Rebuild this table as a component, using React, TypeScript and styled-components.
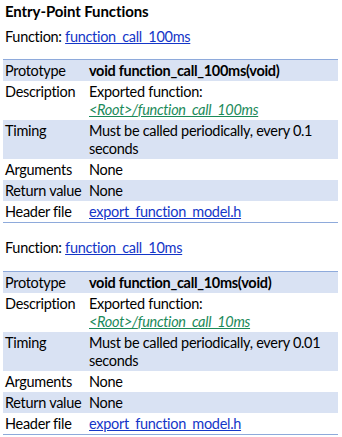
import React from "react";
import styled, { createGlobalStyle } from "styled-components";

const Global = createGlobalStyle`
  html, body { margin: 0; padding: 0; background: #ffffff; }
  body { font-family: Lato, "Open Sans", "Liberation Sans", sans-serif; color: #000; }
`;

const Page = styled.div`
  padding: 1px 4px 0 3px;
  display: flex;
  flex-direction: column;
`;

const Title = styled.h1`
  margin: 0 0 0 2px;
  font-size: 15px;
  font-weight: 700;
  line-height: 20px;
  letter-spacing: -0.1px;
`;

const FnLine = styled.p<{ $top: number }>`
  margin: ${(p) => p.$top}px 0 0 2px;
  font-size: 14.5px;
  line-height: 18px;
  letter-spacing: -0.3px;
`;

const Link = styled.a`
  color: #1436c8;
  text-decoration: underline;
`;

const PathLink = styled.a`
  color: #1b8a5a;
  font-style: italic;
  text-decoration: underline;
`;

const Table = styled.div<{ $top: number }>`
  margin-top: ${(p) => p.$top}px;
  border-top: 1.5px solid #8eaadb;
  border-bottom: 1.5px solid #8eaadb;
  display: flex;
  flex-direction: column;
`;

const Row = styled.div<{ $shade: boolean }>`
  display: grid;
  grid-template-columns: 86px 1fr;
  background: ${(p) => (p.$shade ? "#d9e2f3" : "#ffffff")};
  padding: 1.5px 0;
  font-size: 14.5px;
  line-height: 18px;
  letter-spacing: -0.3px;
`;

const Label = styled.div`
  padding-left: 2px;
  white-space: nowrap;
`;

const Value = styled.div<{ $bold?: boolean }>`
  font-weight: ${(p) => (p.$bold ? 700 : 400)};
  white-space: nowrap;
`;

type Fn = { name: string; period: string };

const Section = ({ fn, first }: { fn: Fn; first: boolean }) => (
  <>
    <FnLine $top={first ? 7 : 16}>
      Function: <Link href="#">{fn.name}</Link>
    </FnLine>
    <Table $top={first ? 13 : 14}>
      <Row $shade>
        <Label>Prototype</Label>
        <Value $bold>void {fn.name}(void)</Value>
      </Row>
      <Row $shade={false}>
        <Label>Description</Label>
        <Value>
          Exported function:
          <br />
          <PathLink href="#">&lt;Root&gt;/{fn.name}</PathLink>
        </Value>
      </Row>
      <Row $shade>
        <Label>Timing</Label>
        <Value>
          Must be called periodically, every {fn.period}
          <br />
          seconds
        </Value>
      </Row>
      <Row $shade={false}>
        <Label>Arguments</Label>
        <Value>None</Value>
      </Row>
      <Row $shade>
        <Label>Return value</Label>
        <Value>None</Value>
      </Row>
      <Row $shade={false}>
        <Label>Header file</Label>
        <Value>
          <Link href="#">export_function_model.h</Link>
        </Value>
      </Row>
    </Table>
  </>
);

export default function App() {
  const fns: Fn[] = [
    { name: "function_call_100ms", period: "0.1" },
    { name: "function_call_10ms", period: "0.01" },
  ];
  return (
    <>
      <Global />
      <Page>
        <Title>Entry-Point Functions</Title>
        {fns.map((f, i) => (
          <Section key={f.name} fn={f} first={i === 0} />
        ))}
      </Page>
    </>
  );
}
